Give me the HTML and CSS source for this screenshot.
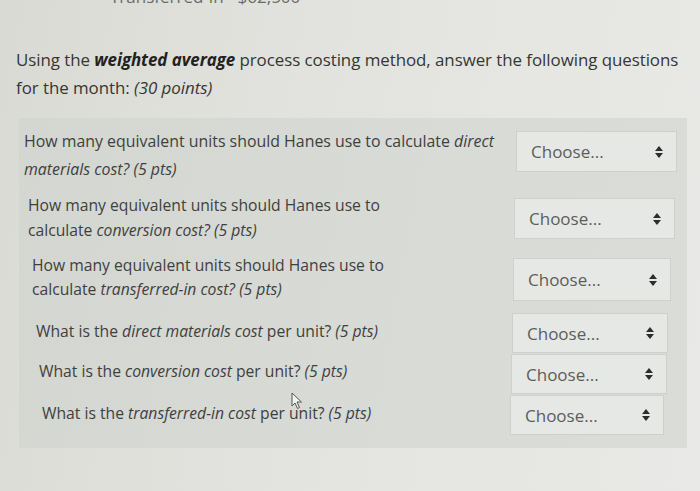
FILE: index.html
```html
<!DOCTYPE html>
<html>
<head>
<meta charset="utf-8">
<link rel="stylesheet" href="styles.css">
</head>
<body>
<div class="page">
  <div class="clip"><div class="cliprow"><span class="c1">Transferred-in</span><span class="c2">$62,500</span></div></div>
  <p class="intro">Using the <b><i>weighted average</i></b> process costing method, answer the following questions for the month: <i>(30 points)</i></p>
  <div class="quiz">
    <div class="row r1">
      <div class="label">How many equivalent units should Hanes use to calculate <i>direct</i><br><i>materials</i> <i>cost? (5 pts)</i></div>
      <div class="select"><span>Choose...</span><span class="arrows"></span></div>
    </div>
    <div class="row r2">
      <div class="label">How many equivalent units should Hanes use to<br>calculate <i>conversion cost? (5 pts)</i></div>
      <div class="select"><span>Choose...</span><span class="arrows"></span></div>
    </div>
    <div class="row r3">
      <div class="label">How many equivalent units should Hanes use to<br>calculate <i>transferred-in cost? (5 pts)</i></div>
      <div class="select"><span>Choose...</span><span class="arrows"></span></div>
    </div>
    <div class="row r4">
      <div class="label">What is the <i>direct materials cost</i> per unit? <i>(5 pts)</i></div>
      <div class="select"><span>Choose...</span><span class="arrows"></span></div>
    </div>
    <div class="row r5">
      <div class="label">What is the <i>conversion cost</i> per unit? <i>(5 pts)</i></div>
      <div class="select"><span>Choose...</span><span class="arrows"></span></div>
    </div>
    <div class="row r6">
      <div class="label">What is the <i>transferred-in cost</i> per unit? <i>(5 pts)</i><svg class="cursor" width="12" height="18" viewBox="0 0 12 18"><path d="M1 1 L1 14 L4 11 L6.5 16.5 L8.5 15.5 L6 10 L10.5 10 Z" fill="#f2f2ee" stroke="#555" stroke-width="1"/></svg></div>
      <div class="select"><span>Choose...</span><span class="arrows"></span></div>
    </div>
  </div>
</div>
</body>
</html>
```
FILE: styles.css
```css
html, body {
  margin: 0;
  padding: 0;
}
body {
  width: 700px;
  height: 491px;
  overflow: hidden;
  font-family: "Open Sans", "Liberation Sans", sans-serif;
  color: #3a3b3a;
  background: linear-gradient(100deg, #d9dad3 0%, #e1e2dd 35%, #e6e7e3 70%, #e9eae7 100%);
}
.page {
  position: relative;
  height: 491px;
}
.clip {
  height: 9px;
  overflow: hidden;
}
.cliprow {
  margin-top: -13px;
  font-size: 17px;
  line-height: 20px;
  color: #6a6b68;
  display: flex;
}
.c1 { margin-left: 110px; }
.c2 { margin-left: 14px; }
.intro {
  margin: 37px 0 0 16px;
  width: 670px;
  font-size: 16.9px;
  line-height: 28px;
  color: #353634;
  letter-spacing: -0.05px;
}
.intro b { font-weight: 700; color: #222; }
.quiz {
  margin: 16px 0 0 19px;
  width: 668px;
  height: 330px;
  background: linear-gradient(100deg, #d3d6d1 0%, #d8dbd6 60%, #d9dcd7 100%);
  padding-top: 4px;
  box-sizing: border-box;
}
.row {
  display: flex;
  align-items: flex-start;
  position: relative;
}
.label {
  box-sizing: border-box;
  font-size: 15.7px;
  line-height: 26px;
  color: #3f403e;
  position: relative;
  white-space: nowrap;
}
.select {
  box-sizing: border-box;
  width: 160px;
  height: 41px;
  background: #e6e8e5;
  border: 1px solid #cdd0cc;
  display: flex;
  align-items: center;
  justify-content: space-between;
  padding: 0 12px 0 14px;
  font-size: 17px;
  color: #5c5d5b;
}
.arrows {
  width: 9px;
  height: 12px;
  position: relative;
}
.arrows::before, .arrows::after {
  content: "";
  position: absolute;
  left: 0;
  border-left: 4.5px solid transparent;
  border-right: 4.5px solid transparent;
}
.arrows::before {
  top: 0;
  border-bottom: 5px solid #2d2e2c;
}
.arrows::after {
  bottom: 0;
  border-top: 5px solid #2d2e2c;
}
.r1 { height: 66px; }
.r1 .label { padding: 5px 0 0 5px; line-height: 28px; width: 497px; font-size: 15.9px; }
.r1 .select { margin-top: 9px; width: 161px; }
.r2 { height: 60px; }
.r2 .label { padding: 5px 0 0 9px; line-height: 25px; width: 495px; }
.r2 .select { margin-top: 10px; width: 161px; }
.r3 { height: 61px; }
.r3 .label { padding: 5px 0 0 13px; line-height: 24px; width: 494px; }
.r3 .select { margin-top: 10px; width: 158px; height: 43px; }
.r4 { height: 43px; }
.r4 .label { padding: 9px 0 0 17px; width: 493px; }
.r4 .select { margin-top: 4px; width: 156px; height: 40px; }
.r5 { height: 43px; }
.r5 .label { padding: 6px 0 0 20px; width: 492px; }
.r5 .select { margin-top: 2px; width: 156px; height: 40px; }
.r6 { height: 44px; }
.r6 .label { padding: 5px 0 0 23px; width: 491px; }
.r6 .select { margin-top: 0; width: 154px; height: 40px; }
.cursor {
  position: absolute;
  left: 272px;
  top: -3px;
}
```
